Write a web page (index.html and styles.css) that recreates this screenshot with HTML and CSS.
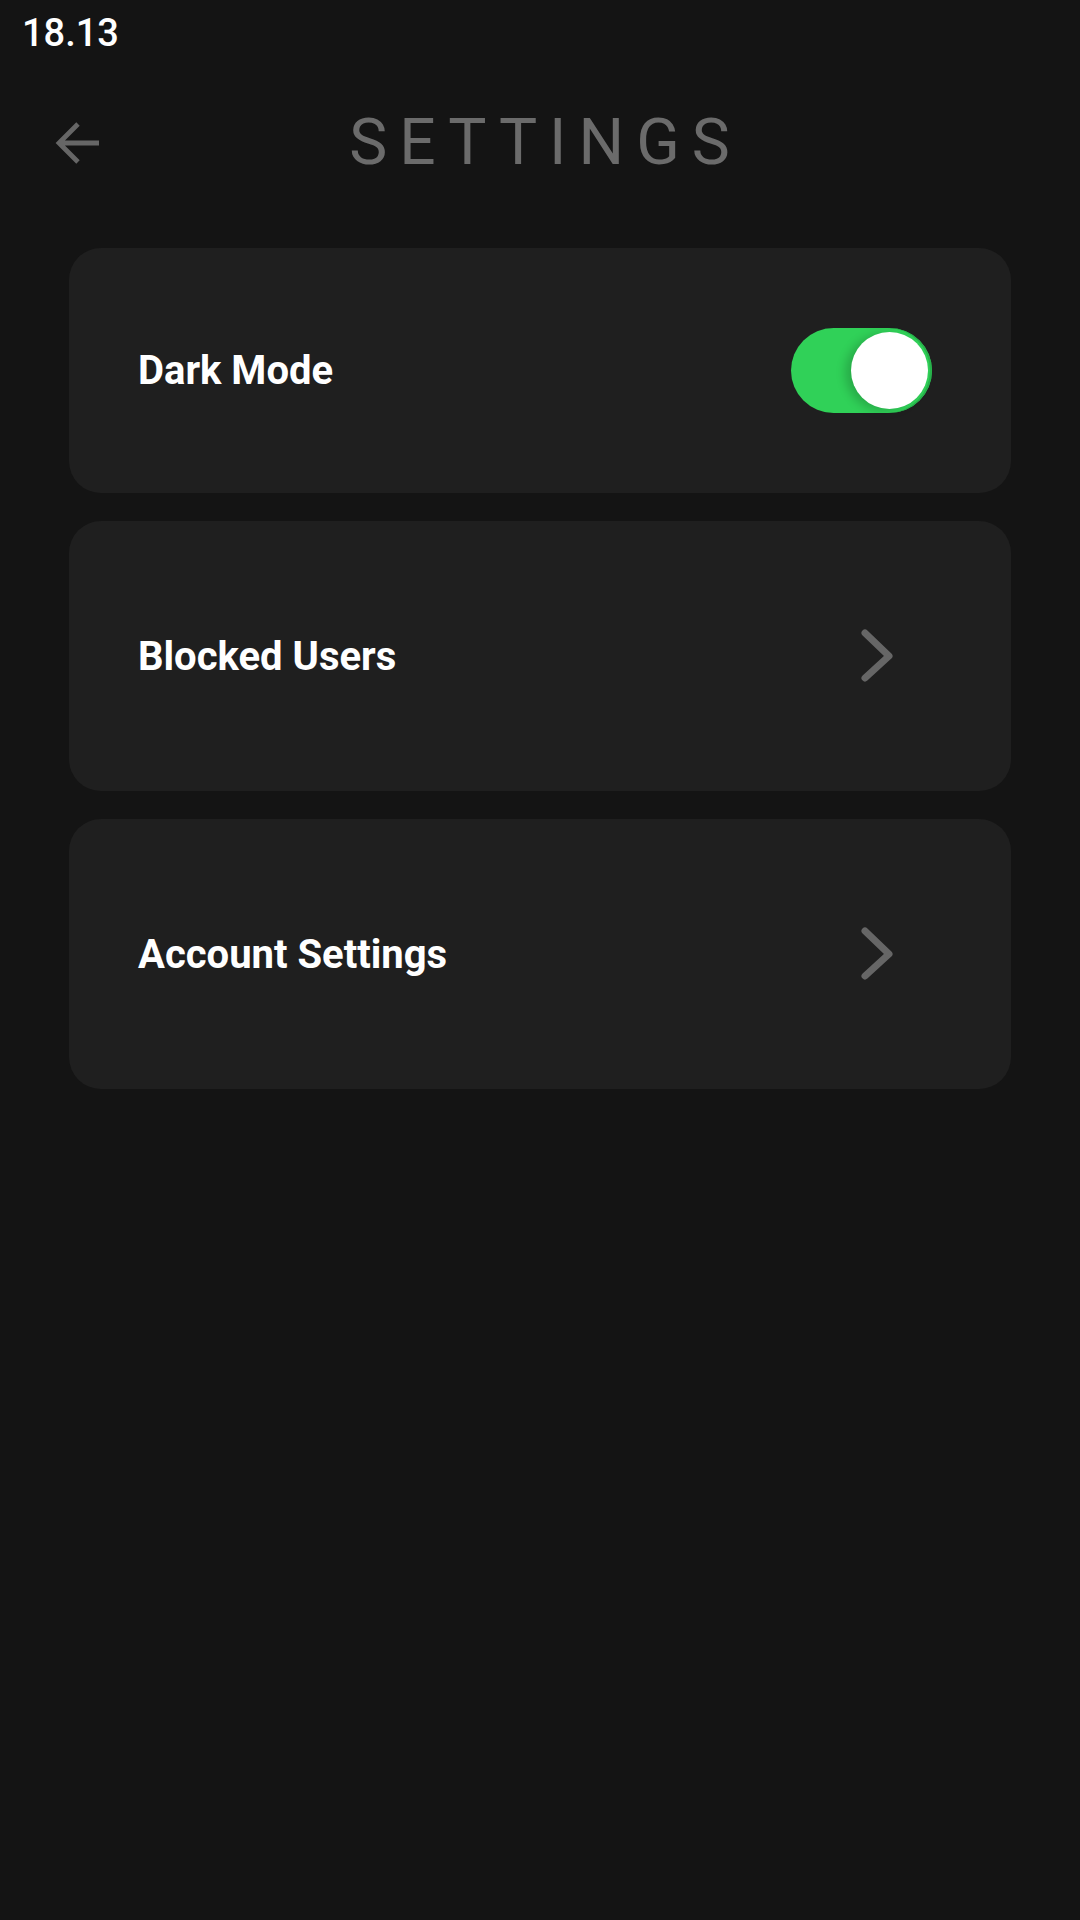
FILE: index.html
```html
<!DOCTYPE html>
<html lang="en">
<head>
<meta charset="utf-8">
<title>Settings</title>
<link rel="stylesheet" href="styles.css">
</head>
<body>
<div class="screen">
  <div class="status-bar"><span class="time">18.13</span></div>
  <header class="header">
    <div class="back">
      <svg class="back-icon" width="48" height="48" viewBox="0 0 48 48" fill="none">
        <path d="M46 24H8M25 5L6 24L25 43" stroke="#666666" stroke-width="4.8" stroke-linecap="butt" stroke-linejoin="miter"/>
      </svg>
    </div>
    <h1 class="title">SETTINGS</h1>
    <div></div>
  </header>
  <main class="list">
    <section class="card card-short">
      <span class="label">Dark Mode</span>
      <div class="toggle"><div class="knob"></div></div>
    </section>
    <section class="card">
      <span class="label">Blocked Users</span>
      <svg class="chevron" width="40" height="60" viewBox="0 0 40 60" fill="none">
        <path d="M9 7L33 30L9 52" stroke="#666666" stroke-width="7" stroke-linecap="round" stroke-linejoin="round"/>
      </svg>
    </section>
    <section class="card">
      <span class="label">Account Settings</span>
      <svg class="chevron" width="40" height="60" viewBox="0 0 40 60" fill="none">
        <path d="M9 7L33 30L9 52" stroke="#666666" stroke-width="7" stroke-linecap="round" stroke-linejoin="round"/>
      </svg>
    </section>
  </main>
</div>
</body>
</html>
```
FILE: styles.css
```css
* { box-sizing: border-box; }
html, body {
  margin: 0;
  padding: 0;
  background: #141414;
}
body {
  width: 1080px;
  height: 1920px;
  font-family: Roboto, "Noto Sans", "Liberation Sans", sans-serif;
  color: #ffffff;
}
.screen {
  display: flex;
  flex-direction: column;
}
.status-bar {
  height: 70px;
  padding-left: 22px;
  display: flex;
  align-items: flex-start;
}
.time {
  font-size: 38px;
  font-weight: 500;
  line-height: 1;
  margin-top: 14px;
  color: #ffffff;
}
.header {
  height: 146px;
  display: grid;
  grid-template-columns: 1fr auto 1fr;
  align-items: center;
}
.back {
  padding-left: 53px;
  display: flex;
  align-items: center;
}
.back-icon { display: block; }
.title {
  margin: 0;
  font-size: 64px;
  font-weight: 400;
  letter-spacing: 12px;
  margin-right: -12px;
  padding-left: 6px;
  padding-right: 7px;
  color: #6b6b6b;
  line-height: 1;
}
.list {
  margin: 32px 69px 0;
  display: flex;
  flex-direction: column;
  gap: 28px;
}
.card {
  height: 270px;
  background: #1f1f1f;
  border-radius: 32px;
  padding: 0 115px 0 69px;
  display: flex;
  align-items: center;
  justify-content: space-between;
}
.card-short {
  height: 245px;
  padding-right: 79px;
}
.label {
  font-size: 40px;
  font-weight: 700;
  color: #ffffff;
}
.toggle {
  width: 141px;
  height: 85px;
  border-radius: 43px;
  background: #30d158;
  box-shadow: inset -2px 0 0 #27b34b;
  display: flex;
  align-items: center;
  justify-content: flex-end;
  padding-right: 4px;
}
.knob {
  width: 77px;
  height: 77px;
  border-radius: 50%;
  background: #ffffff;
  box-shadow: -6px 2px 10px rgba(0, 0, 0, 0.18);
}
.chevron { display: block; }
```
